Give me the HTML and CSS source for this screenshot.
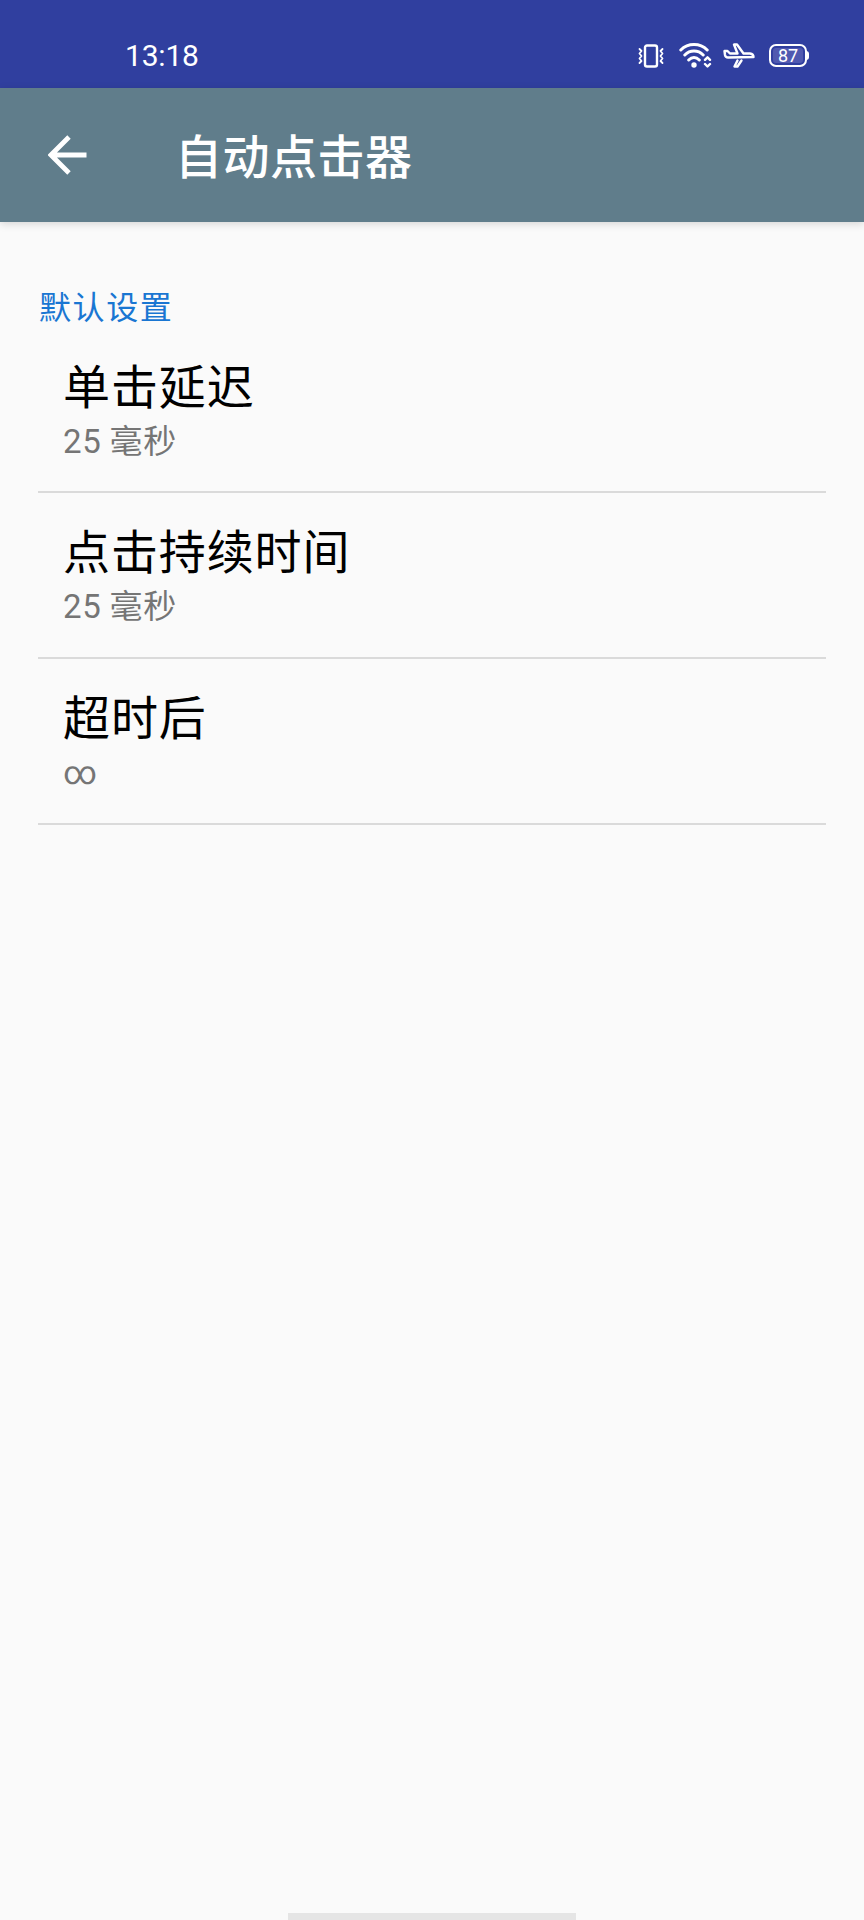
FILE: index.html
```
<!DOCTYPE html>
<html lang="zh-CN">
<head>
    <meta charset="UTF-8">
    <meta name="viewport" content="width=device-width, initial-scale=1.0">
    <title>自动点击器</title>
    <link rel="stylesheet" href="styles.css">
</head>
<body>
    <div class="status-bar">
        <span class="clock">13:18</span>
        <div class="status-icons">
            <svg class="vibrate" width="26" height="24" viewBox="0 0 26 24">
                <rect x="7" y="1.5" width="12" height="21" rx="2"/>
                <path class="thin" d="M1.5 5 L3.5 7 L1.5 9.5 L3.5 12 L1.5 14.5 L3.5 17 L1.5 19 M24.5 5 L22.5 7 L24.5 9.5 L22.5 12 L24.5 14.5 L22.5 17 L24.5 19"/>
            </svg>
            <svg class="wifi" width="33" height="25" viewBox="0 0 33 25">
                <path d="M1.8 7 C9 -0.3 21 -0.3 28.2 7 M5.8 12 C11 6.8 19 6.8 24.2 12 M9.7 17 C13 13.8 17 13.8 20.3 17"/>
                <circle class="fill" cx="15" cy="22" r="2.7"/>
                <path class="arrows" d="M26 16.8 L28.5 14.3 L31 16.8 M26 21 L28.5 23.5 L31 21"/>
            </svg>
            <svg class="plane" width="32" height="25" viewBox="0 0 32 25">
                <path d="M1.5 8 L4.5 8 L7 10.5 L14.5 10.5 L11 1.5 L14 1.5 L20.5 10.5 L27 10.5 Q30.5 11 30.5 14 L5 14.5 Q2.5 14.5 2 12 Z M14.5 17.5 L11.5 23.5 L14.5 23.5 L18.5 17.5"/>
            </svg>
            <div class="battery"><span>87</span></div>
        </div>
    </div>
    <div class="toolbar">
        <svg class="back" width="40" height="40" viewBox="0 0 40 40">
            <path d="M38.5 20 H3.5 M21 2 L3 20 L21 38"/>
        </svg>
        <h1>自动点击器</h1>
    </div>
    <div class="content">
        <h2>默认设置</h2>
        <div class="item">
            <div class="name">单击延迟</div>
            <div class="value">25 毫秒</div>
        </div>
        <div class="item">
            <div class="name">点击持续时间</div>
            <div class="value">25 毫秒</div>
        </div>
        <div class="item">
            <div class="name">超时后</div>
            <div class="value">∞</div>
        </div>
    </div>
    <div class="nav-handle"></div>
</body>
</html>
```
FILE: styles.css
```
*{
    box-sizing: border-box;
}
body{
    margin:0;
    height:1920px;
    display:flex;
    flex-direction: column;
    background-color: #fafafa;
    font-family: Roboto, "Noto Sans CJK SC", sans-serif;
}
.status-bar{
    height:88px;
    flex:none;
    display:flex;
    align-items: center;
    justify-content: space-between;
    padding:23px 57px 0 125px;
    background-color: #303f9f;
    color:#fff;
}
.clock{
    font-size: 30px;
    line-height: 34px;
    letter-spacing: -0.2px;
}
.status-icons{
    display:flex;
    align-items: center;
}
.status-icons svg{
    fill:none;
    stroke:#fff;
    stroke-width: 2.4;
    stroke-linejoin: round;
    stroke-linecap: round;
}
.status-icons .wifi{
    margin-left:15px;
    stroke-width: 3;
}
.status-icons .thin{
    stroke-width: 1.8;
}
.status-icons .arrows{
    stroke-width: 2.4;
}
.status-icons .fill{
    fill:#fff;
    stroke:none;
}
.plane{
    margin-left:11px;
}
.battery{
    position: relative;
    width:38px;
    height:23px;
    margin-left:14px;
    border:2px solid #fff;
    border-radius: 7px;
    background-color: #5059b0;
    box-shadow: inset 0 0 0 2px #303f9f;
    font-size: 18px;
    line-height: 20px;
    text-align: center;
}
.battery::after{
    content:"";
    position: absolute;
    right:-4px;
    top:5px;
    width:3px;
    height:9px;
    border-radius: 0 3px 3px 0;
    background-color: #fff;
}
.toolbar{
    height:134px;
    flex:none;
    display:flex;
    align-items: center;
    padding:0 47px 0 48px;
    background-color: #607d8b;
    box-shadow: 0 2px 8px rgba(0,0,0,0.15);
}
.back{
    fill:none;
    stroke:#fff;
    stroke-width: 4.8;
}
h1{
    margin:6px 0 0 87px;
    font-size: 47px;
    line-height: 60px;
    font-weight: 500;
    letter-spacing: 0.5px;
    color:#fff;
}
.content{
    flex:1;
    padding:64px 38px 0;
}
h2{
    margin:0 0 0 1px;
    font-size: 32px;
    line-height: 44px;
    font-weight: 400;
    letter-spacing: 1.6px;
    color:#1976d2;
}
.item{
    height:166px;
    padding:30px 25px 0;
    border-bottom: 2px solid #dadada;
}
.item:first-of-type{
    height:163px;
    padding-top:28px;
}
.name{
    font-size: 47px;
    line-height: 60px;
    letter-spacing: 0.9px;
    color:#000;
}
.value{
    font-size: 33px;
    line-height: 48px;
    letter-spacing: 0.6px;
    word-spacing: -0.5px;
    color:#757575;
}
.nav-handle{
    width:288px;
    height:7px;
    flex:none;
    margin:0 auto;
    background-color: #e5e5e5;
}
```
